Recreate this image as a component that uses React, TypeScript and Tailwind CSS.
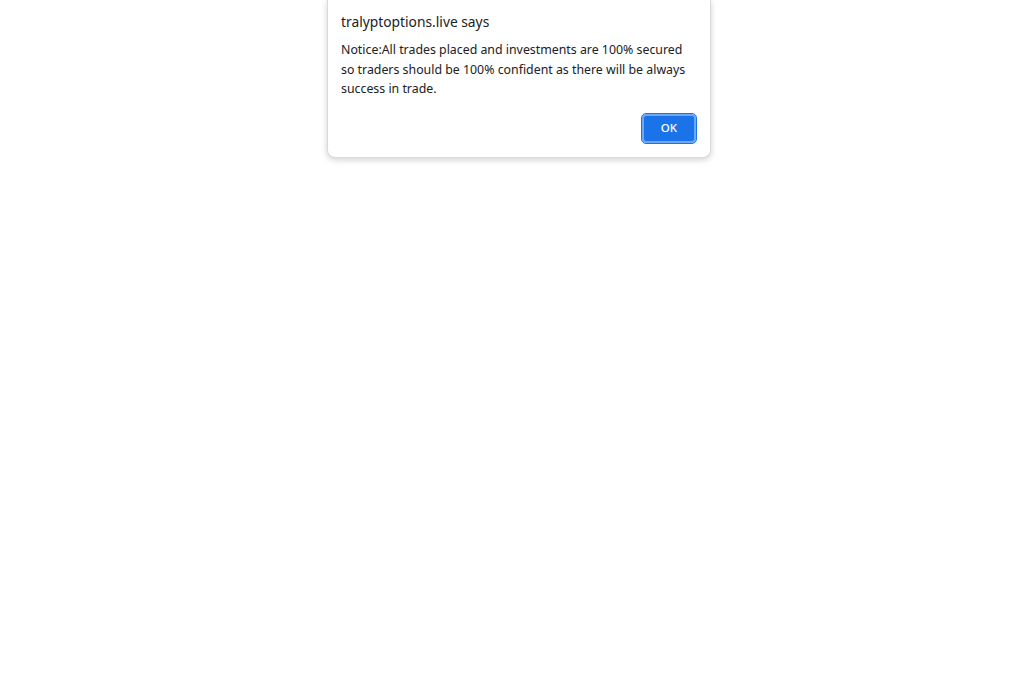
export default function App() {
  return (
    <div className="w-[1024px] h-[683px] bg-white relative" style={{ fontFamily: '"Noto Sans", "Open Sans", sans-serif' }}>
      <div className="absolute left-[327px] top-0 w-[384px] bg-white rounded-b-lg border border-t-0 border-[#d9d9d9] shadow-[0_2px_6px_rgba(0,0,0,0.18)] px-[13px] pt-[11px] pb-[14px]">
        <div className="text-[13.8px] leading-[22px] text-[#202124]">tralyptoptions.live says</div>
        <div className="mt-[7px] text-[12.35px] leading-[19.5px] text-[#202124]">
          Notice:All trades placed and investments are 100% secured so traders should be 100% confident as there will be always success in trade.
        </div>
        <div className="flex justify-end mt-[15px] pr-[1px]">
          <button className="w-[54px] h-[29px] rounded-[4px] bg-[#1a73e8] text-white text-[11.5px] font-medium border-2 border-[#6ea7f5] outline outline-1 outline-[#1a73e8]">
            OK
          </button>
        </div>
      </div>
    </div>
  );
}
